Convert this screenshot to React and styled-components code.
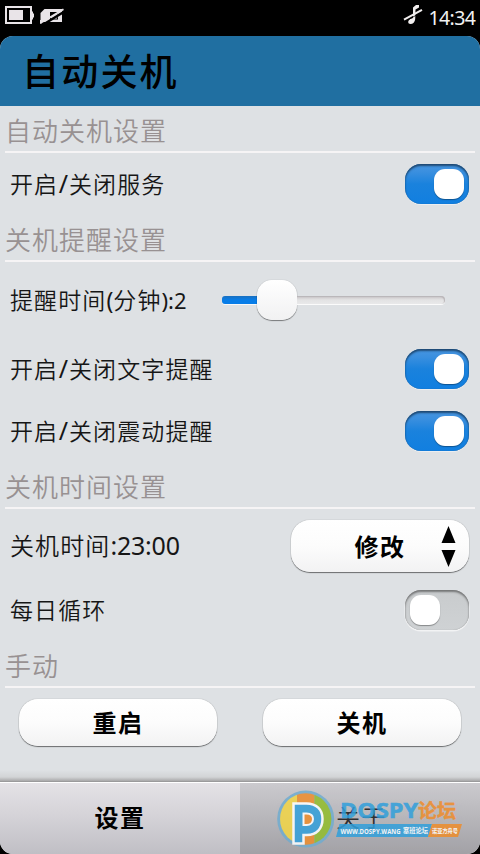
import React from "react";
import styled, { createGlobalStyle, css } from "styled-components";

const GlobalStyle = createGlobalStyle`
  * { box-sizing: border-box; }
  body {
    margin: 0;
    background: #000;
    font-family: "Noto Sans", "Noto Sans CJK SC", sans-serif;
  }
`;

const Screen = styled.div`
  width: 480px;
  height: 854px;
  display: flex;
  flex-direction: column;
  background: #000;
  overflow: hidden;
  white-space: nowrap;
`;

const StatusBar = styled.header`
  height: 36px;
  flex: none;
  display: flex;
  justify-content: space-between;
`;

const StatusGroup = styled.div`
  display: flex;
  height: 36px;
`;

const Clock = styled.span`
  width: 52px;
  padding: 3px 0 0 0.5px;
  color: #f2f2f2;
  font-size: 19.5px;
  line-height: 29px;
  letter-spacing: -0.6px;
`;

const Window = styled.main`
  position: relative;
  height: 818px;
  display: flex;
  flex-direction: column;
  border-radius: 13px;
  overflow: hidden;
  background: #dee1e4;
`;

const TitleBar = styled.h1`
  height: 70px;
  flex: none;
  margin: 0;
  padding-left: 22px;
  background: #206fa1;
  color: #000;
  font-family: "Noto Sans CJK SC", sans-serif;
  font-size: 37px;
  font-weight: 500;
  letter-spacing: 2.2px;
  line-height: 69px;
`;

const SectionTitle = styled.h2`
  height: 47px;
  flex: none;
  margin: 0 5px;
  border-bottom: 2px solid #f6f4f5;
  color: #989192;
  font-family: "Noto Sans CJK SC", sans-serif;
  font-size: 26px;
  font-weight: 350;
  letter-spacing: 1px;
  line-height: 48px;
`;

const Row = styled.div`
  height: ${(p) => p.$height || 62}px;
  flex: none;
  display: flex;
  align-items: center;
  justify-content: space-between;
  padding: ${(p) => p.$top || 0}px 11px 0 10px;
`;

const Label = styled.span`
  padding-bottom: 2px;
  color: #161616;
  font-family: "Noto Sans CJK SC", sans-serif;
  font-size: ${(p) => p.$size || 23}px;
  font-weight: 350;
  letter-spacing: 1.1px;
  line-height: 34px;
`;

const Latin = styled.span`
  font-family: "Noto Sans", sans-serif;
  font-size: ${(p) => p.$size || 23}px;
  font-weight: 400;
  letter-spacing: ${(p) => p.$spacing || 0}px;
  line-height: 1;
`;

const Slash = styled(Latin)`
  margin: 0 1px 0 0.5px;
  font-size: 25px;
`;

const Toggle = styled.button`
  width: 64px;
  height: 40px;
  padding: 5px;
  border: 0;
  border-radius: 16px;
  display: flex;
  justify-content: ${(p) => (p.$on ? "flex-end" : "flex-start")};
  ${(p) =>
    p.$on
      ? css`
          background: linear-gradient(#4795e0 0%, #3a8fdf 20%, #1a82dd 50%, #117fe0 100%);
          box-shadow: inset 0 2px 2px rgba(10, 35, 60, 0.65), inset 0 0 1px #1c5f9c, 0 1px 0 #eceef0;
        `
      : css`
          background: linear-gradient(#c8cbcd, #cfd2d4);
          box-shadow: inset 0 2px 2px rgba(40, 40, 40, 0.5), inset 0 0 1px #999, 0 1px 0 0.5px #f2f3f4;
        `}
`;

const Knob = styled.span`
  width: 30px;
  height: 30px;
  border-radius: 11px;
  background: #fff;
  box-shadow: 0 1px 1px rgba(0, 0, 0, 0.35);
`;

const Slider = styled.div`
  width: 223px;
  height: 42px;
  margin-right: 24px;
  padding-bottom: 1px;
  display: flex;
  align-items: center;
`;

const SliderFill = styled.div`
  width: 35px;
  height: 8px;
  border-radius: 3px 0 0 3px;
  background: linear-gradient(#1a70c0, #087de8 50%);
  box-shadow: 0 1px 0 #f8f8f8;
`;

const SliderThumb = styled.div`
  width: 40px;
  height: 40px;
  border-radius: 15px;
  background: linear-gradient(#fff, #f1f1f2);
  box-shadow: 0 1px 1px rgba(0, 0, 0, 0.45), 0 0 1px rgba(0, 0, 0, 0.3);
`;

const SliderRest = styled.div`
  flex: 1;
  height: 8px;
  border-radius: 0 4px 4px 0;
  background: linear-gradient(#c8c3c6, #e3e3e4 50%, #e9e9ea);
  box-shadow: inset -1px 1px 1px #b9b5b8, 0 1px 0 #fbfbfb;
`;

const Button = styled.button`
  width: ${(p) => p.$width}px;
  height: ${(p) => p.$height}px;
  padding: 0 0 1px;
  border: 0;
  border-radius: 19px;
  display: flex;
  align-items: center;
  justify-content: center;
  position: relative;
  background: linear-gradient(#fff, #fcfcfc 50%, #f2f2f3);
  box-shadow: 0 1px 1px rgba(0, 0, 0, 0.5), 0 0 1px rgba(0, 0, 0, 0.4);
  color: #000;
  font-family: "Noto Sans CJK SC", sans-serif;
  font-size: 24px;
  font-weight: 700;
  letter-spacing: 1.6px;
  line-height: 34px;
`;

const StepArrows = styled.svg`
  position: absolute;
  right: 13px;
  top: 6px;
`;

const ActionRow = styled.div`
  flex: 1;
  display: flex;
  gap: 46px;
  padding: 11px 0 0 19px;
  background: linear-gradient(transparent 82px, #d2d4d6 89px, #a8a8a9 93px, #8d8d8e 94px);
`;

const TabBar = styled.nav`
  height: 72px;
  flex: none;
  display: grid;
  grid-template-columns: 1fr 1fr;
  border-top: 1px solid #fff;
`;

const Tab = styled.button`
  border: 0;
  padding: ${(p) => (p.$active ? "0 0 3px" : "0 0 4px 3px")};
  font-family: "Noto Sans CJK SC", sans-serif;
  font-size: 24px;
  letter-spacing: 1.5px;
  line-height: 34px;
  font-weight: ${(p) => (p.$active ? 700 : 350)};
  color: ${(p) => (p.$active ? "#000" : "#303032")};
  background: ${(p) =>
    p.$active
      ? "linear-gradient(#e4e2e6, #d5d3d8 45%, #c0bfc5)"
      : "linear-gradient(#cbcace, #b9b8bc 45%, #a2a1a6)"};
`;

const Watermark = styled.svg`
  position: absolute;
  left: 270px;
  bottom: 0;
  opacity: 0.85;
  pointer-events: none;
`;

function BatteryIcon() {
  return (
    <svg width="36" height="36" viewBox="0 0 36 36">
      <rect x="6" y="7" width="25" height="16" fill="none" stroke="#e9e4e8" strokeWidth="2" />
      <rect x="9" y="10" width="14" height="10" fill="#e9e4e8" />
      <path d="M32 11.500h1v2h1v4h-1v2h-1z" fill="#e9e4e8" />
    </svg>
  );
}

function CardOffIcon() {
  return (
    <svg width="30" height="36" viewBox="36 0 30 36">
      <path d="M40.500 22v-9l4-4H62v13z" fill="#e9e4e8" />
      <path d="M50 12h8v7.500h-8z" fill="#000" />
      <path d="M51 19.500v-3l4-2 3-1-1 5z" fill="#e9e4e8" />
      <path d="M42.500 25L66 10.500" stroke="#000" strokeWidth="2.400" />
      <path d="M40.500 23L63.500 9.300" stroke="#e9e4e8" strokeWidth="1.800" />
      <path d="M40 20h2v3l-2 1z" fill="#e9e4e8" />
    </svg>
  );
}

function SilentIcon() {
  return (
    <svg width="26" height="36" viewBox="402 0 26 36">
      <path d="M413 7.500l3-2.500h3v2.500l-3.500 2-.3 9.500c-.2 3-2.300 5-4.700 5-3 0-3-3.500-.2-5l2.700-1z" fill="#f1eeee" />
      <path d="M405 21.300l17-9.200" stroke="#000" strokeWidth="0.800" />
      <path d="M404 19.600l18-9.700" stroke="#f1eeee" strokeWidth="2" />
    </svg>
  );
}

function Switch({ on }) {
  return (
    <Toggle type="button" role="switch" aria-checked={on} $on={on}>
      <Knob />
    </Toggle>
  );
}

function ToggleRow({ name }) {
  return (
    <Row>
      <Label>
        开启<Slash>/</Slash>关闭{name}
      </Label>
      <Switch on />
    </Row>
  );
}

function ForumMark() {
  return (
    <Watermark width="210" height="79" viewBox="270 775 210 79" fontFamily='"Open Sans", "Noto Sans CJK SC", sans-serif'>
      <defs>
        <clipPath id="disc">
          <circle cx="305.700" cy="819" r="25.700" />
        </clipPath>
      </defs>
      <circle cx="305.700" cy="819" r="28.500" fill="#70accf" />
      <g clipPath="url(#disc)">
        <path d="M279 790h18v58h-18z" fill="#f2d545" />
        <path d="M297 790h17.500v58H297z" fill="#ee8c2b" />
        <path d="M314.500 790H334v58h-19.500z" fill="#91bd2b" />
      </g>
      <path
        d="M293.500 803.500h13c10 0 16 6 16 15.500s-6 16-15.500 16h-3.500v8.500h-10z"
        fill="#319fdb"
        stroke="#fff"
        strokeWidth="2.500"
      />
      <path d="M303.500 813.500h3c4 0 6.500 2 6.500 5.500s-2.500 6-6.500 6h-3z" fill="#ee8c2b" stroke="#fff" strokeWidth="2" />
      <text x="340" y="818" fontSize="21" fontWeight="700" fill="#319fdb" stroke="#319fdb" strokeWidth="0.600" textLength="78" lengthAdjust="spacingAndGlyphs">DOSPY</text>
      <text x="418" y="817.500" fontSize="19" fontWeight="700" fill="#ee8c2b" stroke="#ee8c2b" strokeWidth="0.400" textLength="38" fontFamily='"Noto Sans CJK SC", sans-serif'>论坛</text>
      <path d="M339.500 824H432l-4 13h-92z" fill="#319fdb" />
      <path d="M432 824h30l-4 13h-30z" fill="#ee8c2b" />
      <g fill="#fff" fontWeight="700">
        <text x="340.500" y="833.500" fontSize="7" textLength="60" lengthAdjust="spacingAndGlyphs">WWW.DOSPY.WANG</text>
        <text x="403" y="833.200" fontSize="6.300" textLength="25" lengthAdjust="spacingAndGlyphs">塞班论坛</text>
        <text x="432" y="833.200" fontSize="6" textLength="26" lengthAdjust="spacingAndGlyphs">诺亚方舟号</text>
      </g>
    </Watermark>
  );
}

export default function App() {
  return (
    <>
      <GlobalStyle />
      <Screen>
        <StatusBar>
          <StatusGroup>
            <BatteryIcon />
            <CardOffIcon />
          </StatusGroup>
          <StatusGroup>
            <SilentIcon />
            <Clock>14:34</Clock>
          </StatusGroup>
        </StatusBar>
        <Window>
          <TitleBar>自动关机</TitleBar>
          <SectionTitle>自动关机设置</SectionTitle>
          <ToggleRow name="服务" />
          <SectionTitle>关机提醒设置</SectionTitle>
          <Row $height={76}>
            <Label>
              提醒时间<Latin>(</Latin>分钟<Latin $size={22}>):2</Latin>
            </Label>
            <Slider>
              <SliderFill />
              <SliderThumb />
              <SliderRest />
            </Slider>
          </Row>
          <ToggleRow name="文字提醒" />
          <ToggleRow name="震动提醒" />
          <SectionTitle>关机时间设置</SectionTitle>
          <Row $height={70} $top={4}>
            <Label $size={24}>
              关机时间<Latin $size={25} $spacing={-0.2}>:23:00</Latin>
            </Label>
            <Button type="button" $width={178} $height={52}>
              修改
              <StepArrows width="15" height="42" viewBox="0 0 15 42">
                <path d="M7.500 0L14.500 17H.5zM.5 24h14L7.500 41z" fill="#000" />
              </StepArrows>
            </Button>
          </Row>
          <Row>
            <Label>每日循环</Label>
            <Switch on={false} />
          </Row>
          <SectionTitle>手动</SectionTitle>
          <ActionRow>
            <Button type="button" $width={198} $height={47}>重启</Button>
            <Button type="button" $width={198} $height={47}>关机</Button>
          </ActionRow>
          <TabBar>
            <Tab type="button" $active>设置</Tab>
            <Tab type="button">关于</Tab>
          </TabBar>
          <ForumMark />
        </Window>
      </Screen>
    </>
  );
}
